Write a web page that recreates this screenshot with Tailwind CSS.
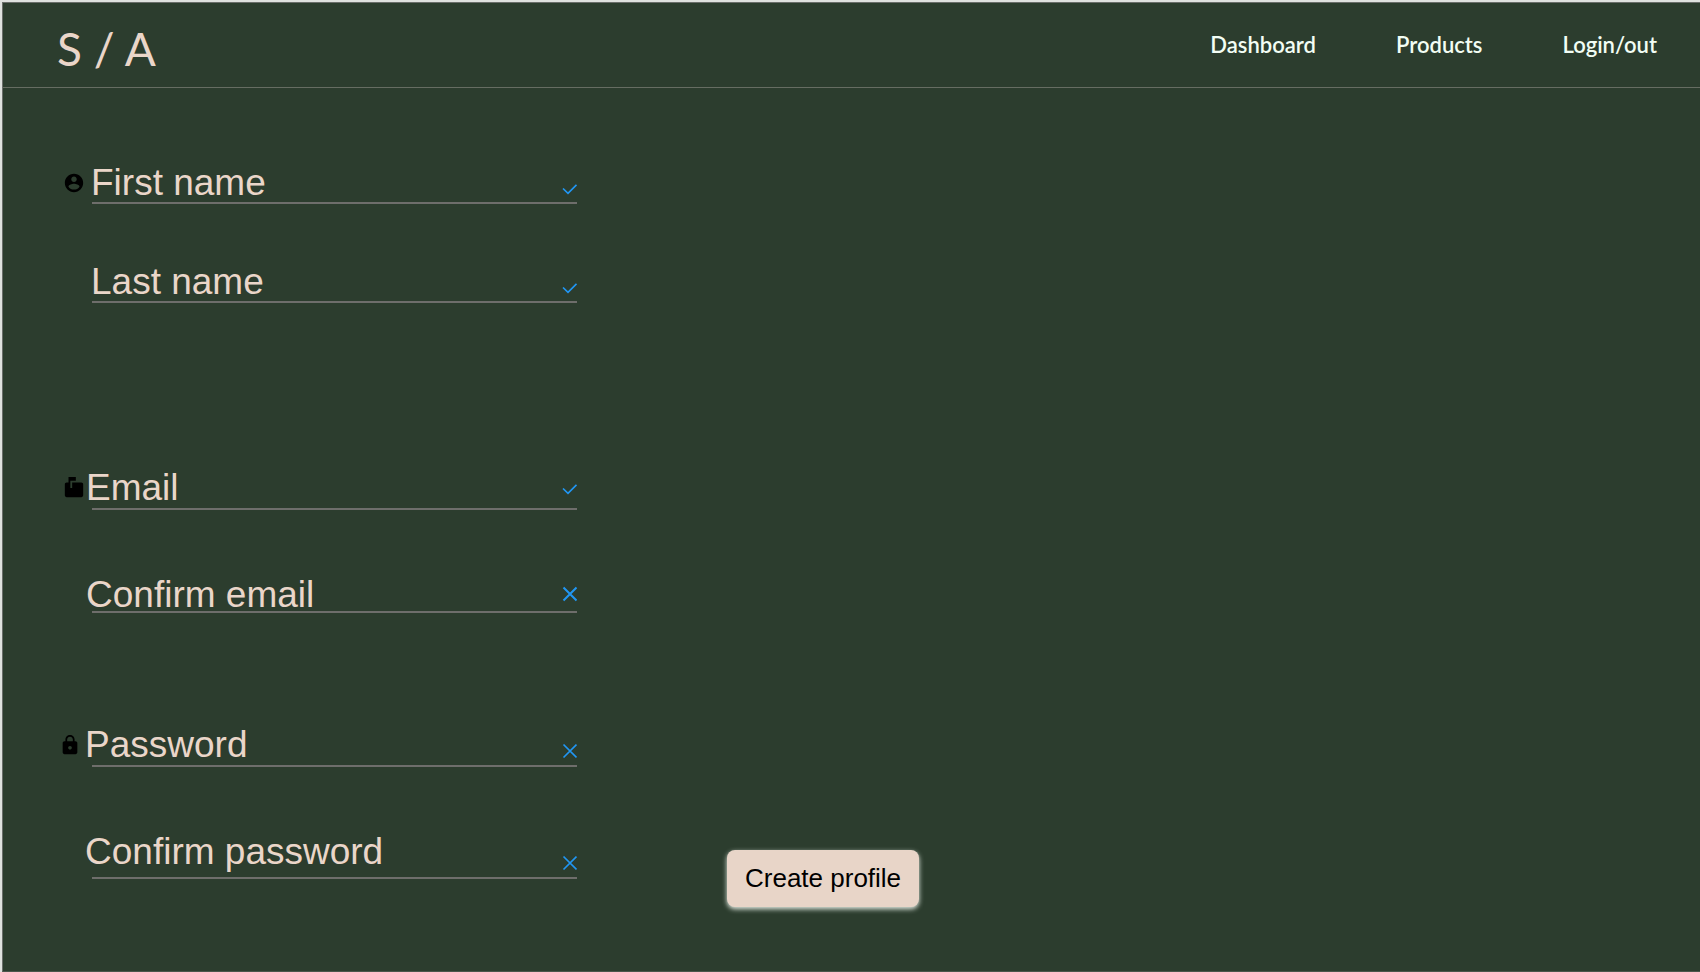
<!DOCTYPE html>
<html lang="en">
<head>
<meta charset="utf-8">
<meta name="viewport" content="width=device-width, initial-scale=1">
<title>Create profile</title>
<script src="https://cdn.jsdelivr.net/npm/@tailwindcss/browser@4"></script>
</head>
<body class="flex min-h-screen flex-col border-t-2 border-l-2 border-[#dfe2df] bg-[#2c3d2e] font-['Liberation_Sans',Arial,sans-serif] text-[#ead6c9]">
<div class="flex-1 border-t border-b border-l border-[#6a6e6a] border-b-[#4a564b]">
<header class="flex h-[85px] justify-between border-b border-[#666d62] pr-[43px] pl-[54px] font-[Lato,sans-serif]">
  <a href="#" class="pt-[18px] text-[46px] leading-[56px] font-normal whitespace-pre">S / A</a>
  <nav class="flex gap-20 pt-7 text-[22px] leading-[28px] font-semibold text-[#f2fdf4]">
    <a href="#">Dashboard</a>
    <a href="#">Products</a>
    <a href="#">Login/out</a>
  </nav>
</header>
<main class="flex items-end pt-[76px] pl-[60px]">
  <form id="profile" class="w-[514px] text-[37px] leading-[38px]">
    <div class="flex h-[38px] items-center">
      <svg class="mr-1.5 h-[22px] w-[22px] shrink-0" viewBox="0 0 24 24" aria-hidden="true"><path d="M12 2C6.480 2 2 6.480 2 12s4.480 10 10 10 10-4.480 10-10S17.520 2 12 2zm0 3c1.660 0 3 1.340 3 3s-1.340 3-3 3-3-1.340-3-3 1.340-3 3-3zm0 14.200c-2.500 0-4.710-1.280-6-3.220.03-1.990 4-3.080 6-3.080 1.990 0 5.970 1.090 6 3.080-1.290 1.940-3.500 3.220-6 3.220z"/></svg>
      <label for="first">First name</label>
      <input id="first" type="text" class="h-full min-w-0 flex-1 bg-transparent outline-none">
      <svg class="mt-3 h-4 w-4 shrink-0" viewBox="0 0 16 16" fill="none" stroke="#2196f3" stroke-width="1.700" aria-hidden="true"><path d="M2 7.500 7 12.300 15.500 3.800"/></svg>
    </div>
    <div class="ml-[29px] h-[2px] bg-[#6e6e6b]"></div>

    <div class="mt-[59px] flex h-[38px] items-center pl-7">
      <label for="last">Last name</label>
      <input id="last" type="text" class="h-full min-w-0 flex-1 bg-transparent outline-none">
      <svg class="mt-3 h-4 w-4 shrink-0" viewBox="0 0 16 16" fill="none" stroke="#2196f3" stroke-width="1.700" aria-hidden="true"><path d="M2 7.500 7 12.300 15.500 3.800"/></svg>
    </div>
    <div class="ml-[29px] h-[2px] bg-[#6e6e6b]"></div>

    <div class="mt-[166px] flex h-[38px] items-center">
      <svg class="mr-px h-[22px] w-[22px] shrink-0" viewBox="0 0 24 24" aria-hidden="true"><path d="M20 6H10v6H8V4h6V0H6v6H4c-1.100 0-2 .9-2 2v12c0 1.100.9 2 2 2h16c1.100 0 2-.9 2-2V8c0-1.100-.9-2-2-2z"/></svg>
      <label for="email">Email</label>
      <input id="email" type="email" class="h-full min-w-0 flex-1 bg-transparent outline-none">
      <svg class="mt-px h-4 w-4 shrink-0" viewBox="0 0 16 16" fill="none" stroke="#2196f3" stroke-width="1.700" aria-hidden="true"><path d="M2 7.500 7 12.300 15.500 3.800"/></svg>
    </div>
    <div class="mt-px ml-[29px] h-[2px] bg-[#6e6e6b]"></div>

    <div class="mt-[69px] flex h-8 items-center pl-[23px]">
      <label for="email2">Confirm email</label>
      <input id="email2" type="email" class="h-full min-w-0 flex-1 bg-transparent outline-none">
      <svg class="mb-0.5 h-4 w-4 shrink-0" viewBox="0 0 16 16" fill="none" stroke="#2196f3" stroke-width="2" aria-hidden="true"><path d="M2.500 1.500 15.500 14.500M15.500 1.500 2.500 14.500"/></svg>
    </div>
    <div class="ml-[29px] h-[2px] bg-[#6e6e6b]"></div>

    <div class="mt-[113px] flex h-[38px] items-center">
      <svg class="mr-1 -ml-1 h-[22px] w-[22px] shrink-0" viewBox="0 0 24 24" aria-hidden="true"><path d="M18 8h-1V6c0-2.760-2.240-5-5-5S7 3.240 7 6v2H6c-1.100 0-2 .9-2 2v10c0 1.100.9 2 2 2h12c1.100 0 2-.9 2-2V10c0-1.100-.9-2-2-2zm-6 9c-1.100 0-2-.9-2-2s.9-2 2-2 2 .9 2 2-.9 2-2 2zm3.100-9H8.900V6c0-1.710 1.390-3.100 3.100-3.100s3.100 1.390 3.100 3.100v2z"/></svg>
      <label for="pw">Password</label>
      <input id="pw" type="password" class="h-full min-w-0 flex-1 bg-transparent outline-none">
      <svg class="mt-3 h-4 w-4 shrink-0" viewBox="0 0 16 16" fill="none" stroke="#2196f3" stroke-width="1.700" aria-hidden="true"><path d="M2.500 1.500 15.500 14.500M15.500 1.500 2.500 14.500"/></svg>
    </div>
    <div class="mt-px ml-[29px] h-[2px] bg-[#6e6e6b]"></div>

    <div class="mt-[66px] flex h-[38px] items-center pl-[22px]">
      <label for="pw2">Confirm password</label>
      <input id="pw2" type="password" class="h-full min-w-0 flex-1 bg-transparent outline-none">
      <svg class="mt-[22px] h-4 w-4 shrink-0" viewBox="0 0 16 16" fill="none" stroke="#2196f3" stroke-width="1.700" aria-hidden="true"><path d="M2.500 1.500 15.500 14.500M15.500 1.500 2.500 14.500"/></svg>
    </div>
    <div class="mt-1.5 ml-[29px] h-[2px] bg-[#6e6e6b]"></div>
  </form>
  <button type="submit" form="profile" class="-mb-7 ml-[150px] h-[57px] rounded-lg bg-[#e8d5c8] px-[18px] pb-0.5 text-[26px] leading-[30px] text-black shadow-[0_2px_5px_#e8f0e8]">Create profile</button>
</main>
</div>
</body>
</html>
